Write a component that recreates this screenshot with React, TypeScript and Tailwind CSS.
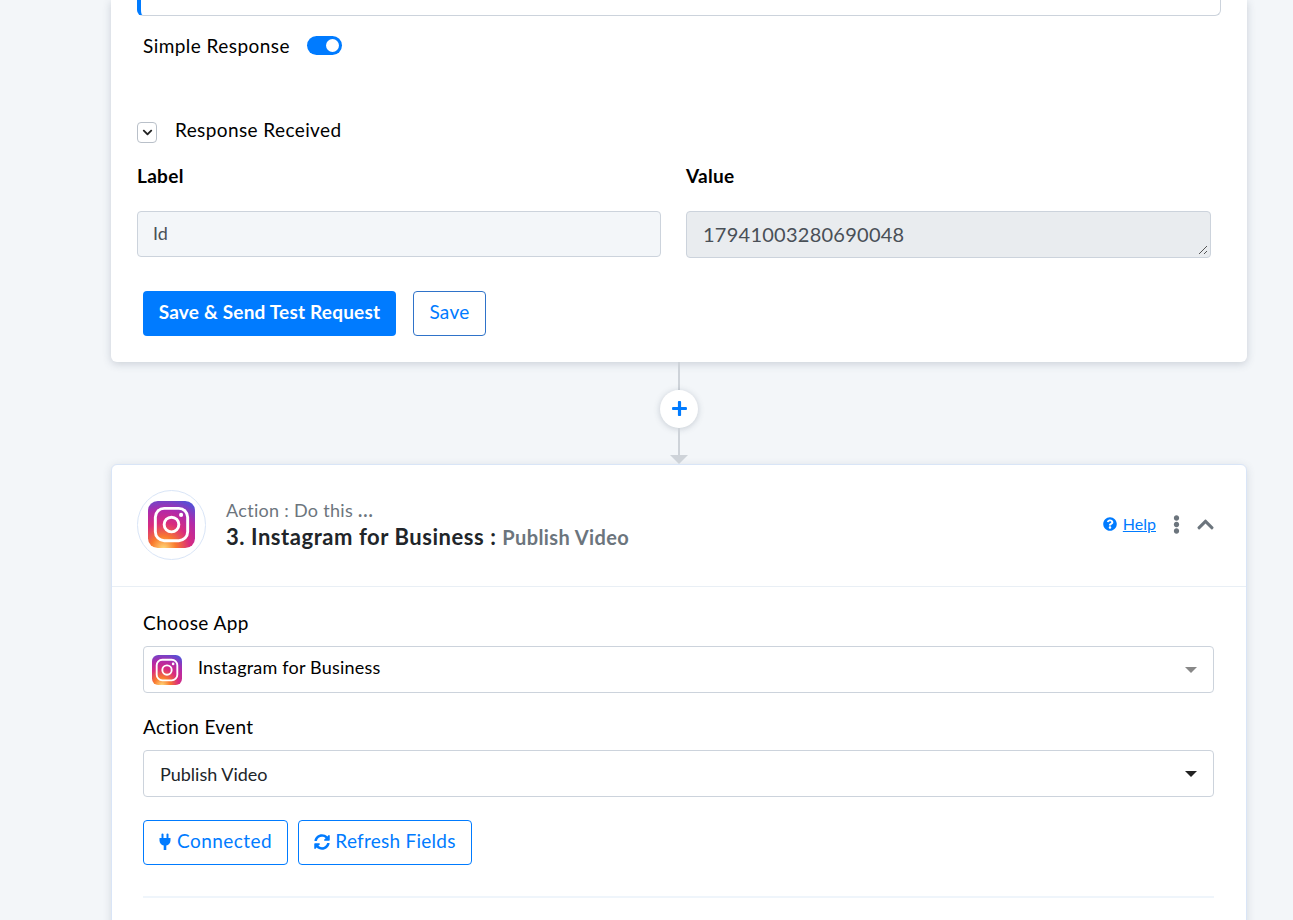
import { useId } from 'react';
import { FaChevronDown, FaChevronUp, FaEllipsisV, FaPlus, FaQuestionCircle, FaSyncAlt } from 'react-icons/fa';

const font = "font-['Lato','Liberation_Sans',sans-serif]";

function InstagramLogo({ size }: { size: number }) {
  const id = useId();
  return (
    <svg width={size} height={size} viewBox="0 0 48 48" className="block shrink-0">
      <defs>
        <radialGradient id={`${id}-a`} cx="0.33" cy="1.02" r="1.12">
          <stop offset="0" stopColor="#ffdc7d" />
          <stop offset="0.24" stopColor="#f97a2e" />
          <stop offset="0.5" stopColor="#d92c7d" />
          <stop offset="0.74" stopColor="#b12aaa" />
          <stop offset="1" stopColor="#5550d6" />
        </radialGradient>
      </defs>
      <rect width="48" height="48" rx="10" fill={`url(#${id}-a)`} />
      <rect x="7.500" y="7.500" width="33" height="33" rx="9" fill="none" stroke="#fff" strokeWidth="3" />
      <circle cx="24" cy="24" r="7.500" fill="none" stroke="#fff" strokeWidth="3" />
      <circle cx="33.800" cy="14.200" r="2.100" fill="#fff" />
    </svg>
  );
}

function PlugIcon() {
  return (
    <svg width="12" height="17" viewBox="0 0 12 17" className="block" fill="currentColor">
      <rect x="2.500" y="0.500" width="2" height="5" rx="1" />
      <rect x="7.500" y="0.500" width="2" height="5" rx="1" />
      <path d="M0.500 5h11v2.500c0 2.600-1.800 4.600-4.200 5V17H4.700v-4.500C2.300 12.100.5 10.100.5 7.500z" />
    </svg>
  );
}

function Caret({ color }: { color: string }) {
  return <span className={`h-0 w-0 border-x-[6px] border-t-[6px] border-x-transparent ${color}`} />;
}

export default function App() {
  return (
    <div className={`h-[920px] overflow-hidden bg-[#f3f6f9] pl-[111px] pr-[46px] ${font}`}>
      {/* Webhook step card, scrolled past the top */}
      <section className="h-[362px] rounded-b-md bg-white px-[26px] shadow-[0_2px_8px_rgba(60,75,100,0.22)]">
        <div className="h-4 rounded-b-md border border-t-0 border-[#ccd3dc] border-l-4 border-l-[#007bff]" />
        <div className="mt-[18px] ml-1.5 flex items-center gap-[17px]">
          <span className="text-[19px] leading-6 tracking-[0.45px] text-black">Simple Response</span>
          <span className="mb-0.5 flex h-[19px] w-[35px] items-center justify-end rounded-full bg-[#007bff] pr-[3px]">
            <span className="size-[13px] rounded-full bg-white" />
          </span>
        </div>
        <div className="mt-[61px] flex h-6 items-center gap-[18px]">
          <span className="mt-[3px] flex h-[21px] w-5 items-center justify-center rounded border border-[#b9c0c9] text-[#222]">
            <FaChevronDown className="size-[11px]" />
          </span>
          <span className="pb-0.5 text-[19px] leading-6 tracking-[0.4px] text-black">Response Received</span>
        </div>
        <div className="mt-[21px] flex gap-[25px]">
          <div className="w-[524px]">
            <div className="text-[19px] leading-6 font-bold tracking-[0.3px] text-black">Label</div>
            <div className="mt-[23px] flex h-[46px] items-center rounded border border-[#ccd3dc] bg-[#f3f6f9] px-[15px] pb-0.5 text-lg text-[#495057]">Id</div>
          </div>
          <div className="w-[525px]">
            <div className="text-[19px] leading-6 font-bold tracking-[0.3px] text-black">Value</div>
            <div className="relative mt-[23px] flex h-[47px] items-center rounded border border-[#ccd3dc] bg-[#e9ecef] pr-[15px] pb-0.5 pl-4 text-xl tracking-[0.25px] text-[#495057]">
              17941003280690048
              <svg width="10" height="10" viewBox="0 0 10 10" className="absolute right-0.5 bottom-0.5" stroke="#555" fill="none">
                <path d="M1 9 9 1M6 9 9 6" />
              </svg>
            </div>
          </div>
        </div>
        <div className="mt-[33px] ml-1.5 flex gap-[17px]">
          <button className="h-[45px] w-[253px] rounded bg-[#007bff] pb-0.5 text-[19px] font-bold tracking-[0.2px] text-white">Save &amp; Send Test Request</button>
          <button className="h-[45px] w-[73px] rounded border border-[#2f73c9] pb-0.5 text-[19px] tracking-[0.3px] text-[#007bff]">Save</button>
        </div>
      </section>

      {/* Connector between the steps */}
      <div className="flex h-[102px] flex-col items-center">
        <span className="h-7 w-0.5 bg-[#ced3d9]" />
        <span className="flex size-[38px] shrink-0 items-center justify-center rounded-full bg-white text-[#007bff] shadow-[0_1px_6px_rgba(60,75,100,0.25)]">
          <FaPlus className="size-[17px]" />
        </span>
        <span className="h-7 w-0.5 bg-[#ced3d9]" />
        <span className="h-0 w-0 border-x-[9px] border-t-[9px] border-x-transparent border-t-[#ced3d9]" />
      </div>

      {/* Instagram action step */}
      <section className="h-[500px] rounded-md border border-[#d9e5f7] bg-white shadow-[0_2px_8px_rgba(60,75,100,0.16)]">
        <header className="flex h-[122px] items-center border-b border-[#e9eff5] pr-[31px] pb-0.5 pl-[25px]">
          <div className="flex h-[70px] w-[69px] items-center justify-center rounded-full border border-[#d9e5f7]">
            <InstagramLogo size={47} />
          </div>
          <div className="ml-5 flex-1 pb-px">
            <div className="text-lg leading-6 tracking-[0.3px] text-[#6c757d]">
              Action : Do this <span className="font-bold tracking-[1px]">...</span>
            </div>
            <div className="mt-px text-[22px] leading-7 font-bold tracking-[0.55px] text-[#212529]">
              3. Instagram for Business : <span className="text-xl tracking-[0.4px] text-[#6c757d]">Publish Video</span>
            </div>
          </div>
          <span className="mb-0.5 flex items-center gap-1.5 text-[#007bff]">
            <FaQuestionCircle className="size-3.5" />
            <span className="text-base underline">Help</span>
          </span>
          <FaEllipsisV className="ml-[11px] size-[19px] text-[#6c757d]" />
          <FaChevronUp className="ml-2.5 size-[19px] text-[#6c757d]" />
        </header>
        <div className="pt-[24px] pr-8 pl-[31px]">
          <div className="text-[19px] leading-6 tracking-[0.45px] text-black">Choose App</div>
          <div className="mt-[11px] flex h-[47px] items-center rounded border border-[#ccd3dc] pr-4 pl-2 text-black">
            <InstagramLogo size={30} />
            <span className="ml-4 flex-1 pb-1.5 text-lg tracking-[0.2px]">Instagram for Business</span>
            <Caret color="border-t-[#888]" />
          </div>
          <div className="mt-[22px] text-[19px] leading-6 tracking-[0.3px] text-black">Action Event</div>
          <div className="mt-[11px] flex h-[47px] items-center rounded border border-[#ccd3dc] pr-4 pl-4 text-[#212529]">
            <span className="flex-1 text-lg">Publish Video</span>
            <Caret color="border-t-[#222]" />
          </div>
          <div className="mt-[23px] flex gap-2.5">
            <button className="flex h-[45px] w-[145px] items-center justify-center gap-[6px] rounded border border-[#007bff] pb-0.5 text-[19px] tracking-[0.45px] text-[#007bff]">
              <PlugIcon />
              Connected
            </button>
            <button className="flex h-[45px] w-[174px] items-center justify-center gap-[5px] rounded border border-[#007bff] pb-0.5 text-[19px] tracking-[0.25px] text-[#007bff]">
              <FaSyncAlt className="size-4" />
              Refresh Fields
            </button>
          </div>
          <div className="mt-[31px] h-0.5 bg-[#eff5fb]" />
        </div>
      </section>
    </div>
  );
}
